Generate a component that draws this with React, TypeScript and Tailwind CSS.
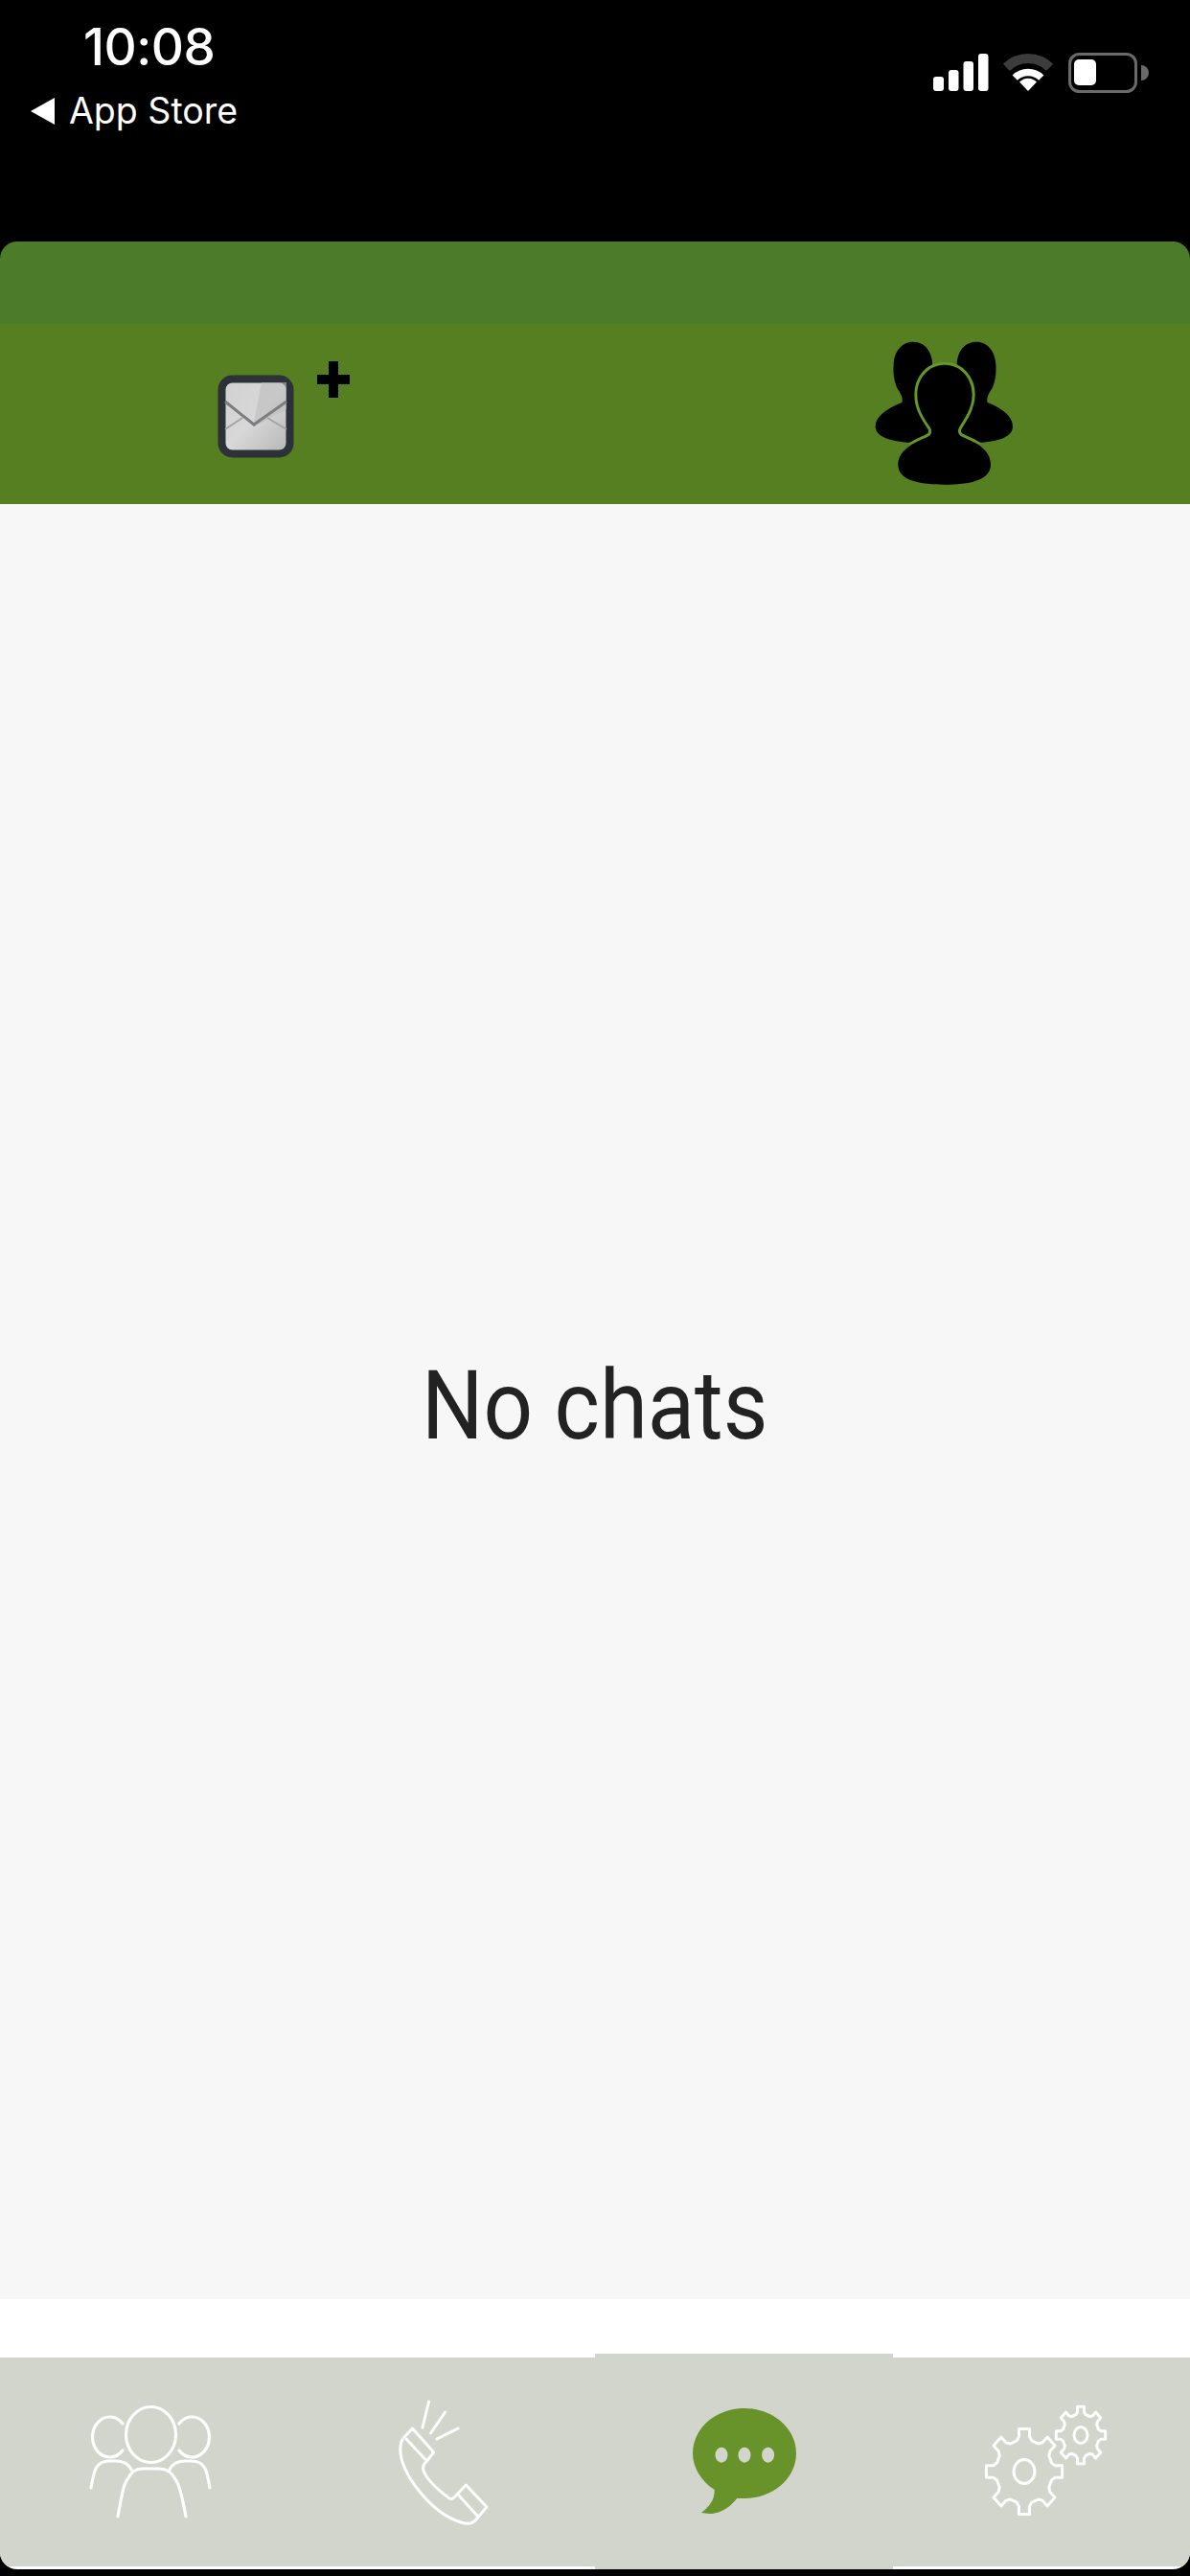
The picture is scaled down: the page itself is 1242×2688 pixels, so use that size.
function gearPath(cx: number, cy: number, rx: number, ry: number) {
  const teeth = 8;
  const root = 0.74;
  const out: string[] = [];
  for (let i = 0; i < teeth; i++) {
    const a = (i * 2 * Math.PI) / teeth - Math.PI / 2;
    const pts: [number, number][] = [
      [root, a - 0.27],
      [0.82, a - 0.17],
      [1, a - 0.14],
      [1, a + 0.14],
      [0.82, a + 0.17],
      [root, a + 0.27],
    ];
    for (const [r, t] of pts) {
      const x = cx + rx * r * Math.cos(t);
      const y = cy + ry * r * Math.sin(t);
      out.push(`${out.length === 0 ? "M" : "L"}${x.toFixed(1)} ${y.toFixed(1)}`);
    }
  }
  return out.join(" ") + " Z";
}

function StatusIcons() {
  return (
    <svg width="230" height="50" viewBox="969 50 230 50">
      <rect x="973" y="80" width="11" height="15" rx="3" fill="#fff" />
      <rect x="989" y="73" width="10.5" height="22" rx="3" fill="#fff" />
      <rect x="1004.5" y="64" width="10.5" height="31" rx="3" fill="#fff" />
      <rect x="1020" y="56" width="10.5" height="39" rx="3" fill="#fff" />
      <path d="M1049.4 70.4 A32 32 0 0 1 1094.6 70.4" fill="none" stroke="#3c3c3c" strokeWidth="10" />
      <path d="M1058.2 81.2 A19.5 19.5 0 0 1 1085.8 81.2" fill="none" stroke="#fff" strokeWidth="7.5" />
      <path d="M1072 95 L1063 85.5 A12.5 12.5 0 0 1 1081 85.5 Z" fill="#fff" />
      <rect x="1115.5" y="56.5" width="69" height="39" rx="10" fill="none" stroke="#6a6a6a" strokeWidth="3" />
      <rect x="1120" y="62" width="23" height="27" rx="5" fill="#fff" />
      <path d="M1190 68 A8 8 0 0 1 1190 84 Z" fill="#6a6a6a" />
    </svg>
  );
}

function MailIcon() {
  return (
    <svg width="80" height="87" viewBox="0 0 80 87">
      <defs>
        <linearGradient id="mailFill" x1="0" y1="0" x2="1" y2="1">
          <stop offset="0" stopColor="#d0d0d0" />
          <stop offset="0.5" stopColor="#d8d8d8" />
          <stop offset="1" stopColor="#b4b4b4" />
        </linearGradient>
      </defs>
      <rect x="4.5" y="4.5" width="71" height="78" rx="11" fill="url(#mailFill)" stroke="#2d3138" strokeWidth="8" />
      <path d="M46 8 L72 8 L72 36 L37 55 Z" fill="#bcbcbc" opacity="0.6" />
      <path d="M8 28 L38 52 L72 28" fill="none" stroke="#7b7d80" strokeWidth="3" />
      <path d="M8 57 L26 45 M72 57 L52 45" fill="none" stroke="#a2a3a5" strokeWidth="2" />
    </svg>
  );
}

const CENTER_PERSON =
  "M314 122 C365 122 400 165 400 215 C400 260 375 290 358 320 C352 335 360 345 375 350 C425 370 458 395 458 435 C458 480 400 497 314 497 C225 497 168 480 168 435 C168 395 205 370 255 350 C270 345 276 335 270 320 C250 290 228 260 228 215 C228 165 262 122 314 122 Z";

function GroupIcon() {
  return (
    <svg width="146" height="150" viewBox="92 48 438 450">
      <defs>
        <clipPath id="outlineClip">
          <rect x="92" y="48" width="438" height="322" />
        </clipPath>
      </defs>
      <path
        d="M215 50 C255 50 276 85 276 125 L276 360 L200 365 C140 362 97 345 97 315 C97 285 130 260 180 240 C185 225 175 210 165 195 C155 170 152 150 154 120 C156 80 180 50 215 50 Z"
        fill="#000"
      />
      <path
        d="M413 50 C373 50 352 85 352 125 L352 360 L428 365 C488 362 527 345 527 315 C527 285 498 260 448 240 C443 225 453 210 463 195 C473 170 476 150 474 120 C472 80 448 50 413 50 Z"
        fill="#000"
      />
      <path d={CENTER_PERSON} fill="none" stroke="#64992a" strokeWidth="18" clipPath="url(#outlineClip)" />
      <path d={CENTER_PERSON} fill="#000" />
    </svg>
  );
}

function PeopleIcon() {
  return (
    <svg width="136" height="122" viewBox="0 0 136 122" fill="none" stroke="#fff" strokeWidth="3.2" strokeLinecap="round">
      <ellipse cx="67.5" cy="32.5" rx="26" ry="29" />
      <path d="M38 21 A18 21 0 1 0 38 49" />
      <path d="M97 21 A18 21 0 1 1 97 49" />
      <path d="M5 88 C8 70 10 60 24 60 L30 60 C38 60 44 62 47 69" />
      <path d="M129 88 C126 70 124 60 110 60 L104 60 C96 60 90 62 87 69" />
      <path d="M33 118 C37 96 39 84 43 79 C47 71 52 68 58 68 L76 68 C84 68 89 71 93 79 C97 84 100 96 104 118" />
    </svg>
  );
}

function PhoneIcon() {
  return (
    <svg width="96" height="133" viewBox="0 0 96 133" fill="none" stroke="#fff" strokeWidth="3" strokeLinecap="round" strokeLinejoin="round">
      <path d="M32.5 3 L26 30 M49.6 14 L34.5 36 M63 31 L41 42" />
      <path d="M15.5 31 L37.7 56 L28 68 C25 72 27 76 30 81 C36 90 46 98 54 104 C56 105 58 104 59 103 L71.3 90 L93 113 L82 126 C78 131 72 131 66 129 C50 124 36 113 23 97 C10 81 3 66 2.8 53 C2.8 47 4 43 7 40 Z" />
      <path d="M9 42 L28.6 63 M64 101 L83 122" />
    </svg>
  );
}

function ChatIcon() {
  return (
    <svg width="116" height="116" viewBox="0 0 116 116">
      <path
        d="M57 3 C87 3 111 24 111 50 C111 76 87 97 57 97 C54 97 52 97 49.5 96.7 C42 106 32 113 20 113 L12 112 C20 106 26 99 25.7 88 C12 79 3 65 3 50 C3 24 27 3 57 3 Z"
        fill="#68932a"
      />
      <ellipse cx="33" cy="51.7" rx="6.5" ry="8" fill="#d2d5cb" />
      <ellipse cx="57" cy="51.7" rx="6.5" ry="8" fill="#d2d5cb" />
      <ellipse cx="81.6" cy="51.7" rx="6.5" ry="8" fill="#d2d5cb" />
    </svg>
  );
}

function GearsIcon() {
  return (
    <svg width="150" height="125" viewBox="1025 2500 150 125" fill="none" stroke="#fff" strokeWidth="3" strokeLinejoin="round">
      <path d={gearPath(1069, 2579, 40, 45)} />
      <ellipse cx="1069" cy="2579" rx="11" ry="12.5" />
      <path d={gearPath(1128, 2541, 26, 30)} />
      <ellipse cx="1128" cy="2541" rx="7" ry="8.5" />
    </svg>
  );
}

export default function App() {
  return (
    <div
      className="w-[1242px] h-[2688px] bg-black flex flex-col overflow-hidden"
      style={{ fontFamily: '"Inter", "Liberation Sans", sans-serif' }}
    >
      <header className="h-[252px] shrink-0 flex items-start justify-between text-white">
        <div className="flex flex-col pl-[32px] pt-[19px]">
          <div className="pl-[55px] text-[53px] leading-[60px] font-medium tracking-[-0.5px]">10:08</div>
          <div className="flex items-center gap-[15px] mt-[15px] text-[37.5px] leading-[44px]">
            <span className="w-0 h-0 border-y-[14px] border-y-transparent border-r-[25px] border-r-white" />
            <span>App Store</span>
          </div>
        </div>
        <div className="pt-[50px] pr-[42px]">
          <StatusIcons />
        </div>
      </header>

      <section className="shrink-0 rounded-t-[18px] overflow-hidden">
        <div className="h-[86px] bg-[#4c7c2a]" />
        <div className="h-[188px] bg-[#557f21] flex items-start pl-[227px] pr-[184px]">
          <div className="mt-[53px]">
            <MailIcon />
          </div>
          <div className="mt-[39px] ml-[24px] relative w-[34px] h-[38px]">
            <div className="absolute left-[12px] top-0 w-[10px] h-[38px] bg-black" />
            <div className="absolute left-0 top-[14px] w-[34px] h-[10px] bg-black" />
          </div>
          <div className="ml-auto mt-[18px]">
            <GroupIcon />
          </div>
        </div>
      </section>

      <main className="h-[1873px] shrink-0 bg-[#f7f7f7] flex items-center justify-center pt-[8px]">
        <span
          className="text-[100px] leading-[120px] text-[#222222] scale-x-[0.905]"
          style={{ fontFamily: "Roboto, sans-serif" }}
        >
          No chats
        </span>
      </main>

      <div className="h-[282px] shrink-0 bg-white rounded-b-[18px] overflow-hidden flex flex-col">
        <div className="h-[57px] shrink-0" />
        <nav className="grid grid-cols-4 h-[225px] items-start">
          <div className="h-[218px] mt-[4px] bg-[#d2d5cb] pl-[90px] pt-[48px]">
            <PeopleIcon />
          </div>
          <div className="h-[218px] mt-[4px] bg-[#d2d5cb] pl-[104px] pt-[43px]">
            <PhoneIcon />
          </div>
          <div className="h-[225px] bg-[#d2d5cb] pl-[99px] pt-[54px]">
            <ChatIcon />
          </div>
          <div className="h-[218px] mt-[4px] bg-[#d2d5cb] pl-[93px] pt-[40px]">
            <GearsIcon />
          </div>
        </nav>
      </div>
    </div>
  );
}
